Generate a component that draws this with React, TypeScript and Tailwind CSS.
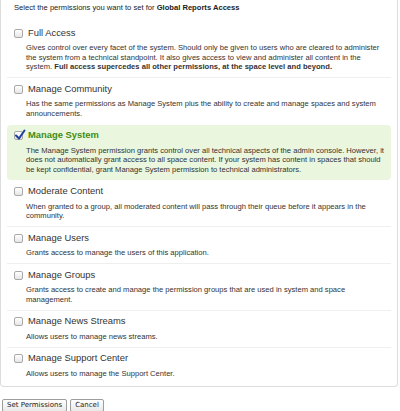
import React, { useState } from 'react';

type Perm = {
  id: string;
  title: string;
  desc: React.ReactNode;
};

const perms: Perm[] = [
  {
    id: 'full',
    title: 'Full Access',
    desc: (
      <>
        Gives control over every facet of the system. Should only be given to users who are cleared to administer the
        system from a technical standpoint. It also gives access to view and administer all content in the system.{' '}
        <b>Full access supercedes all other permissions, at the space level and beyond.</b>
      </>
    ),
  },
  {
    id: 'community',
    title: 'Manage Community',
    desc: 'Has the same permissions as Manage System plus the ability to create and manage spaces and system announcements.',
  },
  {
    id: 'system',
    title: 'Manage System',
    desc: 'The Manage System permission grants control over all technical aspects of the admin console. However, it does not automatically grant access to all space content. If your system has content in spaces that should be kept confidential, grant Manage System permission to technical administrators.',
  },
  {
    id: 'moderate',
    title: 'Moderate Content',
    desc: 'When granted to a group, all moderated content will pass through their queue before it appears in the community.',
  },
  { id: 'users', title: 'Manage Users', desc: 'Grants access to manage the users of this application.' },
  {
    id: 'groups',
    title: 'Manage Groups',
    desc: 'Grants access to create and manage the permission groups that are used in system and space management.',
  },
  { id: 'news', title: 'Manage News Streams', desc: 'Allows users to manage news streams.' },
  { id: 'support', title: 'Manage Support Center', desc: 'Allows users to manage the Support Center.' },
];

function Box({ checked }: { checked: boolean }) {
  return (
    <span className="relative inline-block w-[9px] h-[9px] shrink-0 rounded-[2px] border border-[#a9a9a9] bg-gradient-to-b from-white to-[#e6e6e6]">
      {checked && (
        <svg viewBox="0 0 12 12" className="absolute -left-[1px] -top-[3px] w-[12px] h-[12px]">
          <path d="M2 6.5 L5 9.5 L10.5 1.5" fill="none" stroke="#1d3f9e" strokeWidth="2" strokeLinecap="round" strokeLinejoin="round" />
        </svg>
      )}
    </span>
  );
}

export default function App() {
  const [selected, setSelected] = useState<Record<string, boolean>>({ system: true });

  return (
    <div className="w-[400px] h-[411px] bg-white overflow-hidden font-['Liberation_Sans',Arial,sans-serif] text-[#333]">
      <div className="w-[398px] border-x border-b border-[#dcdcdc] rounded-b-[4px] px-[6px] pb-[2px] pt-[4px] -mt-px">
        <p className="pl-[7px] text-[7.6px] leading-[10px] text-[#222]">
          Select the permissions you want to set for <b>Global Reports Access</b>
        </p>
        <div className="mt-[9px] flex flex-col">
          {perms.map((p, i) => {
            const on = !!selected[p.id];
            const next = perms[i + 1];
            const sep = !on && next && !selected[next.id];
            return (
              <label
                key={p.id}
                className={
                  'block cursor-pointer px-[7px] pt-[5px] pb-[5.5px] ' +
                  (on ? 'bg-[#eaf6dd] rounded-[4px] my-[1px]' : '') +
                  (sep ? ' border-b border-[#efefef]' : '')
                }
                onClick={() => setSelected((s) => ({ ...s, [p.id]: !s[p.id] }))}
              >
                <div className="flex items-center gap-[5px] h-[12px]">
                  <Box checked={on} />
                  <span className={on ? 'text-[9.4px] font-bold text-[#3f8d14]' : 'text-[9.4px] text-[#333]'}>
                    {p.title}
                  </span>
                </div>
                <p className="mt-[4px] pl-[12px] text-[7.6px] leading-[9.5px] text-[#333]">{p.desc}</p>
              </label>
            );
          })}
        </div>
      </div>
      <div className="mt-[12px] ml-[2px] flex gap-[3px]">
        <button className="h-[13px] px-[4px] rounded-[2px] border border-[#9d9d9d] bg-gradient-to-b from-white to-[#e9e9e9] text-[7px] leading-none text-[#222] font-['DejaVu_Sans',sans-serif]">
          Set Permissions
        </button>
        <button className="h-[13px] px-[4px] rounded-[2px] border border-[#9d9d9d] bg-gradient-to-b from-white to-[#e9e9e9] text-[7px] leading-none text-[#222] font-['DejaVu_Sans',sans-serif]">
          Cancel
        </button>
      </div>
    </div>
  );
}
